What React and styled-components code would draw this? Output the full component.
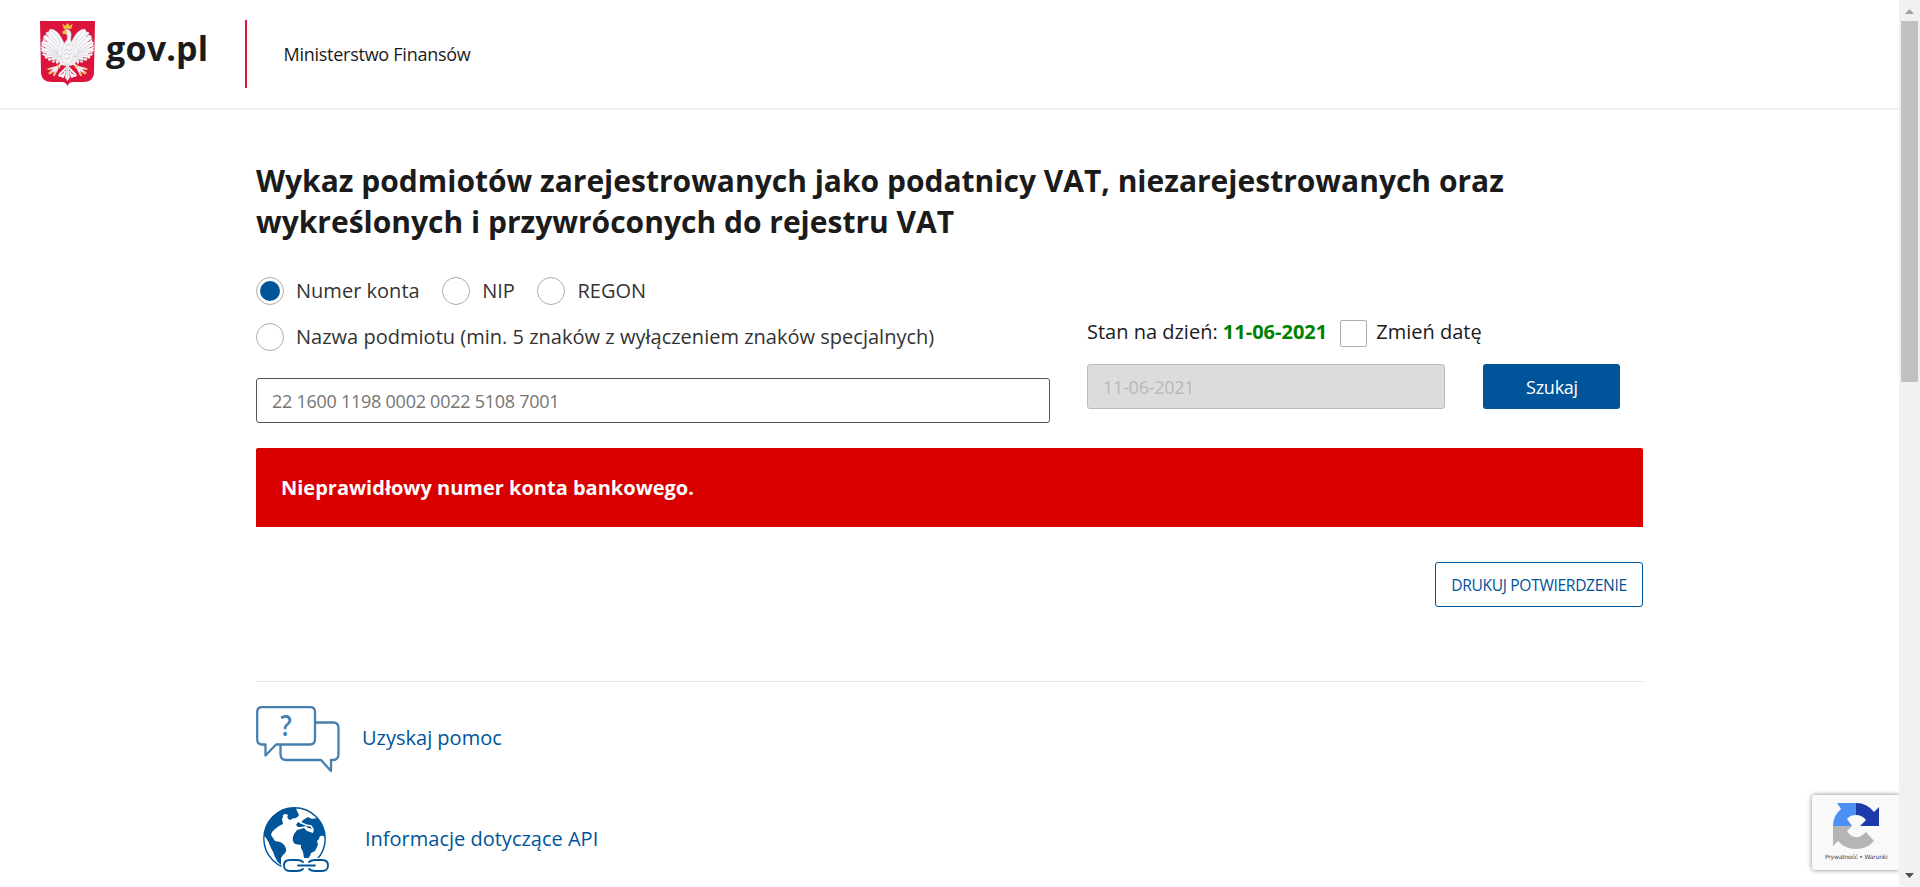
import React from "react";
import styled, { createGlobalStyle } from "styled-components";

const Global = createGlobalStyle`
  * { box-sizing: border-box; }
  body { margin: 0; background: #fff; overflow: hidden; }
  body, input, button { font-family: "Open Sans", "Noto Sans", sans-serif; }
`;

const Screen = styled.div`
  display: flex;
  position: relative;
  width: 1920px;
  height: 887px;
  overflow: hidden;
`;
const Page = styled.div`
  flex: 1;
`;
const Header = styled.header`
  display: flex;
  align-items: flex-start;
  height: 110px;
  padding: 20px 0 0 40px;
  border-bottom: 2px solid #f2f2f2;
`;
const Emblem = styled.svg`
  display: block;
  width: 55px;
  height: 66px;
  margin-top: 1px;
`;
const Brand = styled.span`
  width: 139px;
  margin-left: 11px;
  font-size: 34px;
  line-height: 56px;
  font-weight: 700;
  letter-spacing: 0.2px;
  color: #1b1b1b;
`;
const Ministry = styled.span`
  height: 68px;
  padding-left: 36.5px;
  border-left: 2px solid #dc143c;
  font-size: 18px;
  line-height: 68px;
  letter-spacing: -0.26px;
  color: #1b1b1b;
`;
const Main = styled.main`
  width: 1387px;
  margin: 50px 0 0 256px;
`;
const Title = styled.h1`
  margin: 0;
  font-size: 30px;
  line-height: 41px;
  font-weight: 700;
  color: #1b1b1b;
`;
const Search = styled.form`
  display: flex;
  margin-top: 33px;
`;
const Subject = styled.div`
  width: 794px;
`;
const RadioRow = styled.div`
  display: flex;
  height: 32px;
  margin-bottom: 14px;
  gap: 22.5px;
`;
const Option = styled.label`
  display: flex;
  align-items: center;
  gap: 12px;
  font-size: 20px;
  line-height: 32px;
  letter-spacing: 0.015px;
  color: #333;
  white-space: nowrap;
`;
const Radio = styled.span`
  display: flex;
  align-items: center;
  justify-content: center;
  width: 28px;
  height: 28px;
  border: 1px solid #adadad;
  border-radius: 50%;
  &::after {
    content: "";
    width: 20px;
    height: 20px;
    border-radius: 50%;
    background: ${(p) => (p.$checked ? "#005499" : "transparent")};
  }
`;
const Field = styled.input`
  display: block;
  width: 100%;
  height: 45px;
  padding: 0 15px;
  border: 1px solid #555;
  border-radius: 3px;
  background: #fff;
  font-size: 18px;
  letter-spacing: -0.26px;
  color: #757575;
  &::placeholder { color: #757575; }
  &:disabled {
    border-color: #bbb;
    background: #dcdcdc;
    color: #b8b8b8;
    -webkit-text-fill-color: #b8b8b8;
  }
`;
const AccountField = styled(Field)`
  margin-top: 25px;
`;
const DateSide = styled.div`
  width: 533px;
  margin: 41px 0 0 37px;
`;
const DateLine = styled.div`
  display: flex;
  height: 32px;
  font-size: 20px;
  line-height: 32px;
  color: #1b1b1b;
  white-space: pre;
`;
const Day = styled.b`
  color: #008000;
`;
const Checkbox = styled.span`
  width: 27px;
  height: 27px;
  margin: 4px 9px 0 13px;
  border: 1px solid #adadad;
  border-radius: 2px;
`;
const DateControls = styled.div`
  display: grid;
  grid-template-columns: 358px 137px;
  gap: 38px;
  margin-top: 16px;
`;
const SearchButton = styled.button`
  height: 45px;
  padding: 0 0 0 1px;
  border: 0;
  border-radius: 3px;
  background: #005499;
  color: #fff;
  font-size: 18px;
  letter-spacing: -0.25px;
`;
const Alert = styled.div`
  margin-top: 25px;
  padding: 0 25px;
  height: 79px;
  border-radius: 2px 2px 0 0;
  background: #d90000;
  color: #fff;
  font-size: 20px;
  font-weight: 700;
  line-height: 79px;
`;
const Actions = styled.div`
  display: flex;
  justify-content: flex-end;
  padding: 35px 0 74px;
  border-bottom: 1px solid #e3e3e3;
`;
const PrintButton = styled.button`
  width: 208px;
  height: 45px;
  padding: 1px 0 0;
  border: 1px solid #005499;
  border-radius: 3px;
  background: #fff;
  color: #005499;
  font-size: 15.6px;
  letter-spacing: -0.33px;
  white-space: nowrap;
`;
const HelpLink = styled.a`
  display: flex;
  align-items: flex-start;
  margin-top: ${(p) => p.$top}px;
  padding-left: ${(p) => p.$indent || 0}px;
  gap: ${(p) => p.$gap}px;
  height: 67px;
  font-size: 20px;
  line-height: 64px;
  color: #005499;
`;
const Scrollbar = styled.aside`
  display: flex;
  flex-direction: column;
  align-items: center;
  width: 21px;
  background: #f1f1f1;
`;
const Thumb = styled.div`
  width: 17px;
  height: 361px;
  margin: 7px 2px auto;
  background: #c1c1c1;
`;
const Arrow = styled.svg`
  display: block;
  width: 9px;
  height: 5px;
  margin: ${(p) => p.$margin};
`;
const Captcha = styled.div`
  position: absolute;
  left: 1812px;
  top: 795px;
  width: 87px;
  height: 75px;
  border-radius: 3px 0 0 3px;
  background: #f9f9f9;
  box-shadow: 0 0 5px #808080;
  clip-path: inset(-10px 0 -10px -10px);
  display: flex;
  flex-direction: column;
  align-items: flex-start;
`;
const CaptchaMark = styled.svg`
  margin: 8px 0 0 21px;
  width: 46px;
  height: 47px;
`;
const CaptchaTerms = styled.span`
  margin: 3px 0 0 13px;
  font: 6px/8px "DejaVu Sans", sans-serif;
  letter-spacing: -0.18px;
  color: #444;
  white-space: nowrap;
`;

function Wing() {
  return (
    <g>
      <path
        d="M25 27 L24 22 Q22 17 19 13 Q15 8 10 8 Q9 10 8.500 11 Q6 10.500 6 12 L6 14 Q3 14 3.500 17 Q2 18 3 20 Q.5 21 2 24 L1 25 Q0 26 2 28 L1 29 Q1 31 3 31 L2 33 Q3 35 5 35 L5 37 Q6 38 8 37 L8 39 Q10 41 12 38 L12 41 Q14 43 16 39 L16 42 Q18 44 19 40 L20 43 L25 45 Z"
        fill="#f8f7f9"
        stroke="#c9c0c8"
        strokeWidth=".35"
      />
      <path
        d="M8 11 L21 26 M6 14 L20 28 M4 18 L19 30 M3 22 L18 31 M3 26 L18 32 M3 30 L19 33 M5 34 L20 34 M9 37 L21 35 M13 39 L23 35 M17 40 L24 37 M12 10 Q18 15 21 23"
        fill="none"
        stroke="#c4bfc9"
        strokeWidth=".55"
      />
      <path
        d="M5 12 L18 26 M3 18 L18 29 M1 25 L17 32 M2 32 L19 34 M7 37 L20 36 M12 40 L23 37"
        fill="none"
        stroke="#dc143c"
        strokeWidth=".6"
        strokeDasharray="5 30"
      />
      <path d="M22 11 Q24 15 24.500 20 L22.500 17 Q20.500 13 22 11 Z" fill="#dc143c" />
      <path
        d="M23 41 L19 45 L15 48 L13 47 M17 46 L9 48 M18 46 L10 52 M18 46 L14 54"
        fill="none"
        stroke="#eeeaf0"
        strokeWidth="2.200"
        strokeLinecap="round"
      />
      <path
        d="M8 48 L10 48 M9 52 L11 51 M14 54 L15 52"
        stroke="#efb73c"
        strokeWidth="1.600"
        strokeLinecap="round"
      />
      <path d="M17 44 L20 47" stroke="#efc33f" strokeWidth="1.500" />
      <path
        d="M26 47 L20 53 Q18 55 21 55 L24 53 M25 51 L23 56"
        fill="none"
        stroke="#f6f5f7"
        strokeWidth="2"
        strokeLinecap="round"
      />
    </g>
  );
}

function PolishEmblem() {
  return (
    <Emblem viewBox="0 0 55 66">
      <path
        d="M0 0 H55 L54 51 Q54 61 43 61 H33 Q29 61 27.500 65 Q26 61 22 61 H12 Q1 61 1 51 Z"
        fill="#dc143c"
      />
      <Wing />
      <g transform="translate(55 0) scale(-1 1)">
        <Wing />
      </g>
      <path
        d="M24 10 Q26 7 29 9 Q32 11 31 16 Q30 19 32 22 Q35 29 33 37 Q31 43 29 45 L29 51 L30 56 L27.500 60 L25 56 L26 51 L26 45 Q22 41 21.500 33 Q21 25 26 20 Q28 18 27 14 Z"
        fill="#f4f3f6"
        stroke="#c8c1ca"
        strokeWidth=".4"
      />
      <path
        d="M25 23 L27 25 L29 23 L31 25 M23 28 L25 30 L27 28 L29 30 L32 28 M23 32 L25 34 L27 32 L29 34 L32 32 M24 36 L27 39 L29 36 L31 38 M27.500 42 V56 M25 48 H30"
        fill="none"
        stroke="#c6c0ca"
        strokeWidth=".6"
      />
      <path
        d="M24 8 L22.500 3 L25.500 5 L27.500 2 L29.500 5 L32.500 3 L31 8 Q28 7 24 8 Z M27 10 L23 10 Q22 11 23 13 L26 13 Z"
        fill="#f3c13f"
        stroke="#e0a52f"
        strokeWidth=".4"
      />
    </Emblem>
  );
}

function SpeechBubbles() {
  return (
    <svg width="85" height="67" viewBox="0 0 85 67">
      <g fill="none" stroke="#487fb0" strokeWidth="2.300" strokeLinejoin="round">
        <path d="M6 1.200 H54 Q59 1.200 59 6 V33 Q59 38.500 54 38.500 H20 L9.500 49.500 V38.500 H6 Q1.200 38.500 1.200 33 V6 Q1.200 1.200 6 1.200 Z" />
        <path d="M60 16.500 H77 Q82.500 16.500 82.500 22 V48 Q82.500 54 77 54 H75 V65 L65 54 H30 Q24.500 54 24.500 48 V39" />
      </g>
      <text
        x="30"
        y="29.500"
        textAnchor="middle"
        fontFamily="Open Sans"
        fontSize="28"
        fontWeight="600"
        fill="#487fb0"
        textLength="11.500"
        lengthAdjust="spacingAndGlyphs"
      >
        ?
      </text>
    </svg>
  );
}

function LinkedGlobe() {
  return (
    <svg width="67" height="67" viewBox="0 0 67 67">
      <circle cx="31.500" cy="31.500" r="30.700" fill="#fff" stroke="#005499" strokeWidth="1.400" />
      <g fill="#005499">
        <path d="M1 28 Q3 12 17 4 Q25 0 33 1 L34 4 L36 8 Q34 12 31 11 L27 13 Q23 11 25 8 L23 7 Q19 7 20 10 L19 12 L20 17 L16 19 L12 22 L9 25 L8 28 L12 34 L17 35 Q22 37 23 42 Q24 45 20 48 L18 51 L18 58 Q14 55 12 50 Q10 44 8 41 L5 34 Z" />
        <path d="M40 13 L45 10 L49 12 L54 11 Q61 18 62 31 L60 29 L57 29 L56 32 L54 34 L55 38 L52 44 L48 46 L47 49 L44 53 L41 51 L40 45 L38 41 L38 38 L32 37 Q28 34 31 27 L34 23 L41 21 L44 24 L50 26 L51 22 L45 21 L43 19 L38 20 L35 20 L33 18 L35 15 L38 16 Z" />
      </g>
      <path d="M36 15 L43 18 L48 19 L50 22" fill="none" stroke="#fff" strokeWidth="1.400" />
      <path d="M57 30 Q61 26 61 32 Q60 41 54 48 Q54 38 57 30 Z" fill="#fff" />
      <path d="M18 61 Q20 51 29 51 H58 Q69 53 67 67 H18 Z" fill="#fff" />
      <g fill="none" stroke="#005499" strokeWidth="1.800" strokeLinecap="round">
        <path d="M40 55 Q38 53 34 53 H27 Q21 53 21 58.500 Q21 64 27 64 H34 Q38 64 40 62" />
        <path d="M46 55 Q48 53 52 53 H59 Q65 53 65 58.500 Q65 64 59 64 H52 Q48 64 46 62" />
        <path d="M35 58.500 H52" />
      </g>
    </svg>
  );
}

export default function App() {
  return (
    <Screen>
      <Global />
      <Page>
        <Header>
          <PolishEmblem />
          <Brand>gov.pl</Brand>
          <Ministry>Ministerstwo Finansów</Ministry>
        </Header>
        <Main>
          <Title>
            Wykaz podmiotów zarejestrowanych jako podatnicy VAT, niezarejestrowanych oraz
            <br />
            wykreślonych i przywróconych do rejestru VAT
          </Title>
          <Search>
            <Subject>
              <RadioRow>
                <Option><Radio $checked />Numer konta</Option>
                <Option><Radio />NIP</Option>
                <Option><Radio />REGON</Option>
              </RadioRow>
              <RadioRow>
                <Option><Radio />Nazwa podmiotu (min. 5 znaków z wyłączeniem znaków specjalnych)</Option>
              </RadioRow>
              <AccountField placeholder="22 1600 1198 0002 0022 5108 7001" />
            </Subject>
            <DateSide>
              <DateLine>
                <span>Stan na dzień: </span>
                <Day>11-06-2021</Day>
                <Checkbox />
                <span>Zmień datę</span>
              </DateLine>
              <DateControls>
                <Field disabled defaultValue="11-06-2021" />
                <SearchButton type="button">Szukaj</SearchButton>
              </DateControls>
            </DateSide>
          </Search>
          <Alert>Nieprawidłowy numer konta bankowego.</Alert>
          <Actions>
            <PrintButton>DRUKUJ POTWIERDZENIE</PrintButton>
          </Actions>
          <HelpLink $top={24} $gap={21}>
            <SpeechBubbles />
            Uzyskaj pomoc
          </HelpLink>
          <HelpLink $top={34} $indent={7} $gap={35}>
            <LinkedGlobe />
            Informacje dotyczące API
          </HelpLink>
        </Main>
      </Page>
      <Scrollbar>
        <Arrow viewBox="0 0 9 5" $margin="9px 0 0"><path d="M0 5 L4.500 0 L9 5 Z" fill="#a3a3a3" /></Arrow>
        <Thumb />
        <Arrow viewBox="0 0 9 5" $margin="0 0 9px"><path d="M0 0 H9 L4.500 5 Z" fill="#505050" /></Arrow>
      </Scrollbar>
      <Captcha>
        <CaptchaMark viewBox="0 0 46 47">
          <path d="M0 23 Q0 13 8 6 L4 0 H23 V12 Q17 12 14 16 L19 23 Z" fill="#4a90f5" />
          <path d="M23 0 Q34 0 41 9 L46 4 V23 H27 L33 17 Q29 12 23 12 Z" fill="#1c3aa9" />
          <path d="M0 23 H19 L14 28 Q22 40 33 29 L41 38 Q34 46 23 46 Q12 46 5 38 L0 43 Z" fill="#b5b5b5" />
        </CaptchaMark>
        <CaptchaTerms>Prywatność • Warunki</CaptchaTerms>
      </Captcha>
    </Screen>
  );
}
